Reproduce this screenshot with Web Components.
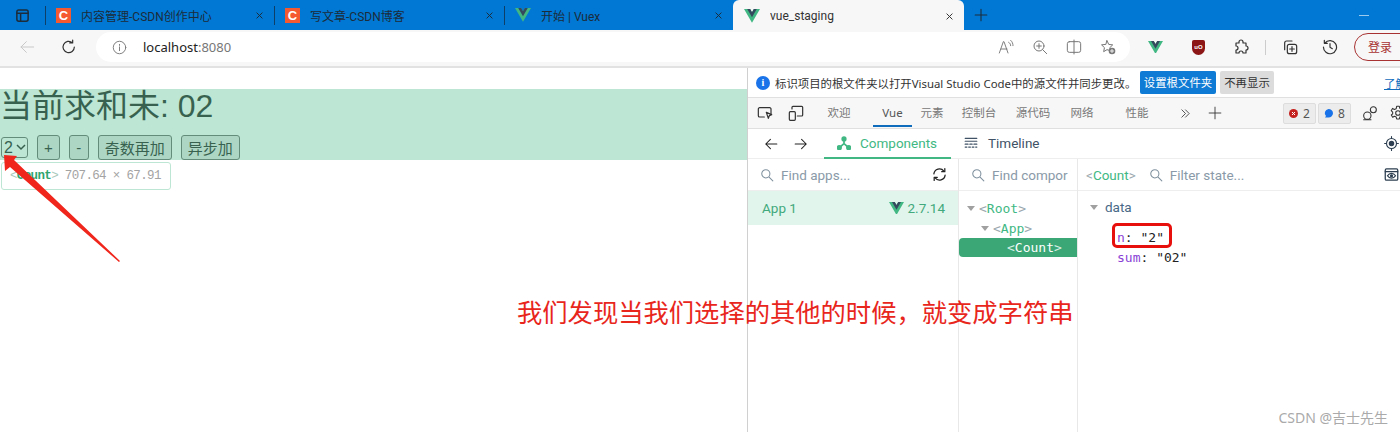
<!DOCTYPE html>
<html lang="zh">
<head>
<meta charset="utf-8">
<title>vue_staging</title>
<style>
  html, body { margin: 0; padding: 0; }
  body { width: 1400px; height: 432px; overflow: hidden; background: #fff; font-family: "Noto Sans", "Noto Sans CJK SC", sans-serif; }
</style>
</head>
<body>
<app-shell></app-shell>

<script>
const SANS = '"Noto Sans", "Noto Sans CJK SC", sans-serif';
const ROBOTO = 'Roboto, "Noto Sans CJK SC", sans-serif';
const MONO = '"DejaVu Sans Mono", monospace';
const VUE_LOGO = '<svg viewBox="0 0 261.76 226.69" width="100%" height="100%"><path fill="#41b883" d="M161.096.001l-30.225 52.351L100.647.001H-.005l130.877 226.688L261.749.001z"/><path fill="#35495e" d="M161.096.001l-30.225 52.351L100.647.001H52.346l78.526 136.01L209.398.001z"/></svg>';

// stroke icons on a 24 box
const ICONS = {
  window: '<rect x="3" y="3" width="18" height="18" rx="3"/><path d="M3 8.5h18M9 8.5V21" />',
  close: '<path d="M5 5l14 14M19 5L5 19"/>',
  plus: '<path d="M12 2v20M2 12h20"/>',
  back: '<path d="M22 12H3M11 4l-8 8 8 8"/>',
  forward: '<path d="M2 12h19M13 4l8 8-8 8"/>',
  reload: '<path d="M20 12a8.5 8.5 0 1 1-3-6.5M17.5 1.5v4.4h-4.4"/>',
  info: '<circle cx="12" cy="12" r="10"/><path d="M12 11v6M12 7v1.6"/>',
  read: '<path d="M2 21L8 4h1l6 17M4.5 15h9M16 5c2 1 3 3 3 5M19 2c2.500 2 3.500 5 3.500 8"/>',
  zoom: '<circle cx="10.500" cy="10.500" r="7.500"/><path d="M16 16l6 6M10.500 7v7M7 10.500h7"/>',
  split: '<rect x="2" y="4" width="20" height="16" rx="3"/><path d="M12 1.500v21"/>',
  star: '<path d="M10.500 2.500l2.600 5.600 6 .7-4.400 4.200 1 4.500-5.200-1.500-5 3 1.200-6L2.300 8.800l6-.7z"/><circle cx="18" cy="18" r="5" fill="currentColor" stroke="none"/><path stroke="#fff" stroke-width="1.300" d="M18 15.500v5M15.500 18h5"/>',
  puzzle: '<path d="M9 4.500a3 3 0 0 1 6 0V6h4.500v4.500a3 3 0 0 1 0 6V21H15a3 3 0 0 0-6 0H4.500v-4.500a3 3 0 0 0 0-6V6H9z"/>',
  collections: '<rect x="8" y="8" width="14" height="14" rx="3"/><path d="M15 11.500v7M11.500 15h7M4 16V6a3 3 0 0 1 3-3h8"/>',
  history: '<path d="M4.500 6A9.800 9.800 0 1 1 2.200 12M3.500 2v4.500H8M12 7v5.500l3.500 2"/>',
  inspect: '<path d="M21 14V6a2 2 0 0 0-2-2H4a2 2 0 0 0-2 2v10a2 2 0 0 0 2 2h7"/><path d="M14 11l8 3.500-3.500 1.500-1.500 4z"/>',
  device: '<rect x="2" y="10" width="9" height="13" rx="1.500"/><path d="M6 6V3.500A1.500 1.500 0 0 1 7.500 2h13A1.500 1.500 0 0 1 22 3.500V15a1.500 1.500 0 0 1-1.500 1.500H14"/>',
  chevrons: '<path d="M4 4l8 8-8 8M12 4l8 8-8 8"/>',
  feedback: '<circle cx="8" cy="16" r="5.500"/><circle cx="17" cy="7" r="4.500"/><path d="M2.500 22h11"/>',
  gear: '<circle cx="12" cy="12" r="3.500"/><path d="M10 2h4l.7 3 2.700 1.200 2.600-1.600 2 3.400-2.200 2.100v2.800l2.200 2.100-2 3.400-2.600-1.600-2.700 1.200-.7 3h-4l-.7-3-2.700-1.200-2.600 1.600-2-3.400L4 13.400v-2.800L1.800 8.500l2-3.400 2.600 1.600L9.300 5.500z"/>',
  search: '<circle cx="10" cy="10" r="7"/><path d="M15.500 15.500l6.500 6.500"/>',
  sync: '<path d="M3 11a9 9 0 0 1 16-4.500M21 13a9 9 0 0 1-16 4.500"/><path d="M20.500 2.500v5h-5M3.500 21.500v-5h5"/>',
  target: '<circle cx="12" cy="12" r="8"/><circle cx="12" cy="12" r="3.500" fill="currentColor"/><path d="M12 1v3M12 20v3M1 12h3M20 12h3"/>',
  eye: '<rect x="2" y="3" width="20" height="18" rx="2"/><path d="M2 7.500h20"/><path d="M5.500 14c3.500-5 9.500-5 13 0-3.500 5-9.500 5-13 0z"/><circle cx="12" cy="14" r="1.500" fill="currentColor"/>',
  timeline: '<path d="M2 4h20M2 9h20M2 14h5M10 14h4M17 14h5M2 19h3M8 19h3M14 19h3M20 19h2"/>'
};

class XIcon extends HTMLElement {
  connectedCallback() {
    const size = this.getAttribute("size") || 16;
    const weight = this.getAttribute("weight") || 1.8;
    const shape = ICONS[this.getAttribute("name")] || "";
    this.attachShadow({ mode: "open" }).innerHTML = `
      <style>:host { display: inline-flex; flex: none; width: ${size}px; height: ${size}px; }</style>
      <svg viewBox="0 0 24 24" width="${size}" height="${size}" fill="none" stroke="currentColor" stroke-width="${weight}" stroke-linecap="round" stroke-linejoin="round">${shape}</svg>`;
  }
}

class VueLogo extends HTMLElement {
  connectedCallback() {
    const size = this.getAttribute("size") || 16;
    this.attachShadow({ mode: "open" }).innerHTML = `
      <style>:host { display: inline-flex; flex: none; width: ${size}px; height: ${size * 0.866}px; }</style>${VUE_LOGO}`;
  }
}

class BrowserTab extends HTMLElement {
  connectedCallback() {
    const icon = this.getAttribute("icon") === "csdn"
      ? '<span class="csdn">C</span>'
      : '<vue-logo size="16"></vue-logo>';
    this.attachShadow({ mode: "open" }).innerHTML = `
      <style>
        :host { display: flex; align-items: center; box-sizing: border-box; width: ${this.getAttribute("w") || 230}px; height: 30px; padding-left: 10px; font: 12px ${ROBOTO}; color: #1d2c3a; }
        :host([active]) { background: #f7f7f7; border-radius: 6px 6px 0 0; height: 32px; margin-bottom: -2px; color: #333; padding-left: 11px; }
        .csdn { display: flex; align-items: center; justify-content: center; width: 15px; height: 15px; background: #f4592f; color: #fff; font: bold 13px "Liberation Sans", sans-serif; }
        .title { margin-left: 10px; flex: 1; white-space: nowrap; overflow: hidden; }
        x-icon { margin-right: 10px; }
      </style>
      ${icon}<span class="title"><slot></slot></span><x-icon name="close" size="9" weight="2.600"></x-icon>`;
  }
}

class TabStrip extends HTMLElement {
  constructor() {
    super();
    this.attachShadow({ mode: "open" }).innerHTML = `
      <style>
        :host { display: flex; align-items: center; height: 30px; background: #0078d4; color: #1d2c3a; }
        .sep { width: 1px; height: 19px; background: #0d3f68; flex: none; }
        .app { margin: 0 15px 0 15px; }
        .add { margin-left: 10px; }
        .min { margin-left: auto; margin-right: 31px; width: 10px; height: 1px; background: #9cc9ee; }
      </style>
      <x-icon class="app" name="window" size="15" weight="2.400"></x-icon>
      <span class="sep"></span><browser-tab icon="csdn" w="228">内容管理-CSDN创作中心</browser-tab>
      <span class="sep"></span><browser-tab icon="csdn" w="229">写文章-CSDN博客</browser-tab>
      <span class="sep"></span><browser-tab icon="vue" w="228">开始 | Vuex</browser-tab>
      <browser-tab icon="vue" active w="231">vue_staging</browser-tab>
      <x-icon class="add" name="plus" size="14" weight="1.800"></x-icon>
      <span class="min"></span>`;
  }
}

class BrowserToolbar extends HTMLElement {
  constructor() {
    super();
    this.attachShadow({ mode: "open" }).innerHTML = `
      <style>
        :host { display: flex; align-items: center; box-sizing: border-box; height: 38px; background: #f7f7f7; border-bottom: 2px solid #e2e2e2; padding-bottom: 2px; color: #333; overflow: hidden; }
        .back { margin-left: 19px; color: #c9c9c9; }
        .reload { margin-left: 26px; margin-right: 19px; }
        .address { flex: none; display: flex; align-items: center; box-sizing: border-box; width: 1034px; height: 30px; background: #fff; border-radius: 15px; padding: 0 14px 0 16px; font: 13px ${SANS}; color: #222; }
        .address b { font-weight: 400; color: #777; }
        .address .i { color: #777; margin-right: 16px; }
        .tools { margin-left: auto; display: flex; align-items: center; gap: 18px; color: #777; }
        .exts { flex: none; display: flex; align-items: center; }
        .shield { margin-left: 29px; width: 13px; height: 15px; background: #8c1515; border-radius: 2px 2px 7px 7px; color: #fff; font: bold 6px "Liberation Sans", sans-serif; display: flex; align-items: center; justify-content: center; }
        .puzzle { margin-left: 28px; }
        .sep { margin: 0 16px 0 16px; width: 1px; height: 15px; background: #ccc; }
        .hist { margin-left: 24px; margin-right: 16px; }
        .login { flex: none; display: flex; align-items: center; box-sizing: border-box; width: 60px; height: 28px; border: 1px solid #a83232; border-radius: 14px; padding-left: 13px; font: 12px ${SANS}; color: #a83232; }
      </style>
      <x-icon class="back" name="back" size="16" weight="1.500"></x-icon>
      <x-icon class="reload" name="reload" size="16"></x-icon>
      <div class="address">
        <x-icon class="i" name="info" size="15" weight="1.500"></x-icon>
        <span>localhost<b>:8080</b></span>
        <div class="tools">
          <x-icon name="read" size="16" weight="1.400"></x-icon>
          <x-icon name="zoom" size="16" weight="1.500"></x-icon>
          <x-icon name="split" size="16" weight="1.500"></x-icon>
          <x-icon name="star" size="16" weight="1.500"></x-icon>
        </div>
      </div>
      <div class="exts" style="margin-left:18px">
        <vue-logo size="15"></vue-logo>
        <span class="shield">uO</span>
        <x-icon class="puzzle" name="puzzle" size="16"></x-icon>
        <span class="sep"></span>
        <x-icon name="collections" size="16"></x-icon>
        <x-icon class="hist" name="history" size="16"></x-icon>
      </div>
      <span class="login">登录</span>`;
  }
}

class CountDemo extends HTMLElement {
  constructor() {
    super();
    this.attachShadow({ mode: "open" }).innerHTML = `
      <style>
        :host { display: block; position: relative; margin-top: 21px; height: 71px; font-family: "Liberation Sans", "Noto Sans CJK SC", sans-serif; color: #333; }
        h1 { margin: 0; height: 46px; font-size: 32px; line-height: 34px; font-weight: 400; }
        .row { display: flex; align-items: center; gap: 9px; height: 25px; }
        .pick { position: relative; display: flex; margin-left: 1px; }
        .pick svg { position: absolute; right: 2px; top: 7px; pointer-events: none; }
        select { appearance: none; box-sizing: border-box; width: 27px; height: 21px; padding: 0 0 0 2px; font: 16px "Liberation Sans", sans-serif; color: #333; background: #fff; border: 1px solid #767676; border-radius: 3px; }
        button { height: 25px; padding: 0 6px; font: 15px "Liberation Sans", "Noto Sans CJK SC", sans-serif; color: #333; background: #e6e6e6; border: 1px solid #767676; border-radius: 3px; }
        .minus { width: 20px; padding: 0; }
        .tint { position: absolute; inset: 0; background: rgba(65, 184, 131, .35); pointer-events: none; }
      </style>
      <h1>当前求和未: 02</h1>
      <div class="row">
        <label class="pick">
          <select><option>2</option></select>
          <svg width="10" height="7" viewBox="0 0 10 7" fill="none" stroke="#333" stroke-width="1.500"><path d="M1 1l4 4 4-4"/></svg>
        </label>
        <button>+</button><button class="minus">-</button><button>奇数再加</button><button>异步加</button>
      </div>
      <div class="tint"></div>`;
  }
}

class PagePane extends HTMLElement {
  constructor() {
    super();
    this.attachShadow({ mode: "open" }).innerHTML = `
      <style>
        :host { display: block; position: relative; width: 747px; flex: none; border-right: 1px solid #d0d0d0; overflow: visible; }
        .tip { position: absolute; left: 1px; top: 94px; box-sizing: border-box; width: 170px; height: 28px; padding-left: 8px; background: #fff; border: 1px solid #bde6d4; border-radius: 3px; font: 12.500px/26px "Liberation Mono", monospace; letter-spacing: -.65px; color: #a3a3a3; white-space: nowrap; }
        .tip b { color: #2fa56f; }
        .tip i { font-style: normal; color: #a9c9bb; }
      </style>
      <count-demo></count-demo>
      <div class="tip"><i>&lt;</i><b>Count</b><i>&gt;</i> 707.64 × 67.91</div>`;
  }
}

class DevtoolsInfobar extends HTMLElement {
  constructor() {
    super();
    this.attachShadow({ mode: "open" }).innerHTML = `
      <style>
        :host { display: flex; align-items: center; box-sizing: border-box; height: 30px; border-bottom: 1px solid #e0e0e0; padding-left: 8px; font: 11.400px ${SANS}; color: #333; white-space: nowrap; overflow: hidden; }
        .dot { flex: none; width: 14px; height: 14px; border-radius: 50%; background: #1a73e8; color: #fff; font: bold 10px/14px "Liberation Serif", serif; text-align: center; margin-right: 5px; }
        .msg { width: 359px; flex: none; }
        .btn { flex: none; box-sizing: border-box; height: 23px; line-height: 23px; padding: 0 2px; border-radius: 2px; text-align: center; }
        .go { width: 76px; margin-left: 6px; background: #0f7bd4; color: #fff; }
        .no { width: 54px; margin-left: 4px; background: #dcdcdc; }
        a { margin-left: 110px; color: #0f6cbd; text-decoration: underline; }
      </style>
      <span class="dot">i</span>
      <span class="msg">标识项目的根文件夹以打开Visual Studio Code中的源文件并同步更改。</span>
      <span class="btn go">设置根文件夹</span><span class="btn no">不再显示</span>
      <a>了解</a>`;
  }
}

class DevtoolsTabs extends HTMLElement {
  constructor() {
    super();
    this.attachShadow({ mode: "open" }).innerHTML = `
      <style>
        :host { display: flex; align-items: center; box-sizing: border-box; height: 31px; background: #f7f7f7; border-bottom: 1px solid #e0e0e0; font: 11.500px ${SANS}; color: #777; overflow: hidden; white-space: nowrap; }
        x-icon { color: #333; }
        .t { position: relative; flex: none; text-align: center; line-height: 30px; height: 30px; }
        .on { color: #555; }
        .on::after { content: ""; position: absolute; left: 0; right: 0; bottom: 1px; height: 2px; background: #0f6cbd; }
        .badge { display: flex; align-items: center; justify-content: center; gap: 5px; box-sizing: border-box; flex: none; width: 33px; height: 21px; background: #ececec; border: 1px solid #ddd; border-radius: 2px; font-size: 12px; color: #555; }
      </style>
      <x-icon name="inspect" size="16" style="margin-left:9px"></x-icon>
      <x-icon name="device" size="16" style="margin-left:15px"></x-icon>
      <span class="t" style="width:24px;margin-left:23px">欢迎</span>
      <span class="t on" style="width:39px;margin-left:22px">Vue</span>
      <span class="t" style="width:24px;margin-left:8px">元素</span>
      <span class="t" style="width:36px;margin-left:17px">控制台</span>
      <span class="t" style="width:36px;margin-left:18px">源代码</span>
      <span class="t" style="width:24px;margin-left:19px">网络</span>
      <span class="t" style="width:24px;margin-left:31px">性能</span>
      <x-icon name="chevrons" size="11" style="margin-left:31px"></x-icon>
      <x-icon name="plus" size="14" weight="1.500" style="margin-left:17px"></x-icon>
      <span class="badge" style="margin-left:61px"><svg width="9" height="9" viewBox="0 0 9 9"><circle cx="4.500" cy="4.500" r="4.500" fill="#c5221f"/><path d="M3 3l3 3M6 3L3 6" stroke="#fff"/></svg>2</span>
      <span class="badge" style="margin-left:2px"><svg width="9" height="9" viewBox="0 0 9 9"><path fill="#1a73e8" d="M4.500 0a4.500 4.200 0 0 1 0 8.400H1L2 7A4.500 4.200 0 0 1 4.500 0z"/></svg>8</span>
      <x-icon name="feedback" size="16" weight="1.600" style="margin-left:11px"></x-icon>
      <x-icon name="gear" size="16" weight="1.600" style="margin-left:12px"></x-icon>`;
  }
}

class VueHeader extends HTMLElement {
  constructor() {
    super();
    this.attachShadow({ mode: "open" }).innerHTML = `
      <style>
        :host { display: flex; align-items: center; box-sizing: border-box; height: 30px; border-bottom: 1px solid #eee; font: 13.500px/28px "Roboto", sans-serif; color: #4a5a6a; }
        .nav { color: #222; }
        .tab { display: flex; align-items: center; box-sizing: border-box; height: 30px; padding-bottom: 2px; }
        .tab.on { position: relative; width: 127px; padding-left: 13px; margin-left: 16px; color: #41b883; }
        .tab.on::after { content: ""; position: absolute; left: 0; right: 0; bottom: 0; height: 2px; background: #41b883; }
        .tab svg { margin-right: 9px; }
        .tl { margin-left: 13px; color: #3f5266; }
        .tl x-icon { margin-right: 10px; }
        .end { margin-left: auto; margin-right: 1px; color: #2c3e50; }
      </style>
      <x-icon class="nav" name="back" size="14" style="margin-left:16px"></x-icon>
      <x-icon class="nav" name="forward" size="14" style="margin-left:16px"></x-icon>
      <div class="tab on">
        <svg width="14" height="14" viewBox="0 0 24 24" fill="#41b883" stroke="#41b883" stroke-width="3"><circle cx="12" cy="5" r="3"/><circle cx="4" cy="20" r="3"/><circle cx="20" cy="20" r="3"/><path fill="none" d="M12 8v5l-8 7M12 13l8 7"/></svg>
        Components
      </div>
      <div class="tab tl"><x-icon name="timeline" size="14" weight="2"></x-icon>Timeline</div>
      <x-icon class="end" name="target" size="15"></x-icon>`;
  }
}

class SearchBar extends HTMLElement {
  constructor() {
    super();
    this.attachShadow({ mode: "open" }).innerHTML = `
      <style>
        :host { display: flex; align-items: center; box-sizing: border-box; height: 32px; border-bottom: 1px solid #eee; padding-left: 12px; font: 13.500px "Roboto", sans-serif; color: #8a9aa8; white-space: nowrap; overflow: hidden; }
        x-icon { margin-right: 7px; color: #7f919e; }
        .text { flex: 1; overflow: hidden; }
      </style>
      <x-icon name="search" size="14" weight="1.800"></x-icon><span class="text"><slot></slot></span><slot name="end"></slot>`;
  }
}

class AppsColumn extends HTMLElement {
  constructor() {
    super();
    this.attachShadow({ mode: "open" }).innerHTML = `
      <style>
        :host { display: block; width: 210px; flex: none; border-right: 1px solid #e8e8e8; }
        .app { display: flex; align-items: center; height: 34px; padding: 0 13px 0 14px; background: #e1f5ec; font: 13.500px "Roboto", sans-serif; color: #41a97c; }
        .app span:first-child { flex: 1; }
        .app vue-logo { margin-right: 4px; }
      </style>
      <search-bar>Find apps...<x-icon slot="end" name="sync" size="15" weight="2" style="margin-right:11px;color:#222"></x-icon></search-bar>
      <div class="app"><span>App 1</span><vue-logo size="15"></vue-logo><span>2.7.14</span></div>`;
  }
}

class TreeRow extends HTMLElement {
  connectedCallback() {
    const depth = Number(this.getAttribute("depth") || 0);
    this.attachShadow({ mode: "open" }).innerHTML = `
      <style>
        :host { display: flex; align-items: center; box-sizing: border-box; height: 19px; margin-bottom: .5px; padding-left: ${8 + depth * 14}px; font: 13px ${MONO}; color: #9aa7ae; }
        :host([selected]) { background: #3ba776; border-radius: 4px 0 0 4px; color: #d6efe3; }
        .tri { flex: none; width: 12px; height: 5px; }
        .open { box-sizing: border-box; width: 0; height: 0; margin-right: 4px; border: solid transparent; border-width: 5px 4px 0; border-top-color: #a0a0a0; }
        b { font-weight: 400; color: #41b883; }
        :host([selected]) b { color: #fff; }
      </style>
      <span class="tri ${this.hasAttribute("open") ? "open" : ""}"></span>&lt;<b><slot></slot></b>&gt;`;
  }
}

class TreeColumn extends HTMLElement {
  constructor() {
    super();
    this.attachShadow({ mode: "open" }).innerHTML = `
      <style>
        :host { display: block; width: 118px; flex: none; border-right: 1px solid #e8e8e8; }
        .rows { padding-top: 8px; }
      </style>
      <search-bar>Find compor</search-bar>
      <div class="rows">
        <tree-row open>Root</tree-row>
        <tree-row open depth="1">App</tree-row>
        <tree-row selected depth="2">Count</tree-row>
      </div>`;
  }
}

class StateColumn extends HTMLElement {
  constructor() {
    super();
    this.attachShadow({ mode: "open" }).innerHTML = `
      <style>
        :host { display: block; flex: 1; min-width: 0; }
        .head { display: flex; align-items: center; box-sizing: border-box; height: 32px; border-bottom: 1px solid #eee; padding-left: 8px; font: 13.500px "Roboto", sans-serif; color: #8a9aa8; }
        .tag { color: #9aa7ae; margin-right: 13px; }
        .tag b { font-weight: 400; color: #41b883; }
        .head x-icon.s { margin-right: 7px; color: #7f919e; }
        .head x-icon.e { margin-left: auto; margin-right: 1px; color: #2c3e50; }
        .data { padding: 7px 0 0 12px; }
        .title { display: flex; align-items: center; height: 18px; margin-bottom: 12px; font: 13.500px "Roboto", sans-serif; color: #486887; }
        .tri { width: 0; height: 0; margin-right: 7px; border: solid transparent; border-width: 5px 4px 0; border-top-color: #a0a0a0; }
        .prop { height: 20px; margin-left: 27px; font: 13px/20px ${MONO}; color: #222; white-space: nowrap; }
        .prop b { font-weight: 400; color: #8a3fd6; }
      </style>
      <div class="head">
        <span class="tag">&lt;<b>Count</b>&gt;</span>
        <x-icon class="s" name="search" size="14"></x-icon>Filter state...
        <x-icon class="e" name="eye" size="15" weight="2"></x-icon>
      </div>
      <div class="data">
        <div class="title"><span class="tri"></span>data</div>
        <div class="prop"><b>n</b>: "2"</div>
        <div class="prop"><b>sum</b>: "02"</div>
      </div>`;
  }
}

class DevtoolsPane extends HTMLElement {
  constructor() {
    super();
    this.attachShadow({ mode: "open" }).innerHTML = `
      <style>
        :host { display: flex; flex-direction: column; flex: 1; min-width: 0; overflow: hidden; }
        .cols { display: flex; flex: 1; }
      </style>
      <devtools-infobar></devtools-infobar>
      <devtools-tabs></devtools-tabs>
      <vue-header></vue-header>
      <div class="cols"><apps-column></apps-column><tree-column></tree-column><state-column></state-column></div>`;
  }
}

class AppShell extends HTMLElement {
  constructor() {
    super();
    this.attachShadow({ mode: "open" }).innerHTML = `
      <style>
        :host { display: block; position: relative; width: 1400px; height: 432px; overflow: hidden; }
        .main { display: flex; height: 364px; }
        .arrow { position: absolute; left: 0; top: 150px; }
        .note { position: absolute; left: 517px; top: 294px; font: 25.300px/34px "Noto Sans CJK SC", sans-serif; color: #e8261c; white-space: nowrap; }
        .mark { position: absolute; right: 12px; top: 409px; font: 14px/18px ${SANS}; color: #aaa; }
        .box { position: absolute; left: 1112px; top: 223px; box-sizing: border-box; width: 60px; height: 25px; border: 3px solid #e8100c; border-radius: 5px; }
      </style>
      <tab-strip></tab-strip>
      <browser-toolbar></browser-toolbar>
      <div class="main"><page-pane></page-pane><devtools-pane></devtools-pane></div>
      <svg class="arrow" width="124" height="114" viewBox="0 0 124 114">
        <polygon fill="#f0261c" points="4,5 17,6 14,10 120,111 119,112 10,17 5,21"/>
      </svg>
      <div class="note">我们发现当我们选择的其他的时候，就变成字符串</div>
      <div class="box"></div>
      <div class="mark">CSDN @吉士先生</div>`;
  }
}

customElements.define("x-icon", XIcon);
customElements.define("vue-logo", VueLogo);
customElements.define("browser-tab", BrowserTab);
customElements.define("tab-strip", TabStrip);
customElements.define("browser-toolbar", BrowserToolbar);
customElements.define("count-demo", CountDemo);
customElements.define("page-pane", PagePane);
customElements.define("devtools-infobar", DevtoolsInfobar);
customElements.define("devtools-tabs", DevtoolsTabs);
customElements.define("vue-header", VueHeader);
customElements.define("search-bar", SearchBar);
customElements.define("apps-column", AppsColumn);
customElements.define("tree-row", TreeRow);
customElements.define("tree-column", TreeColumn);
customElements.define("state-column", StateColumn);
customElements.define("devtools-pane", DevtoolsPane);
customElements.define("app-shell", AppShell);
</script>
</body>
</html>
